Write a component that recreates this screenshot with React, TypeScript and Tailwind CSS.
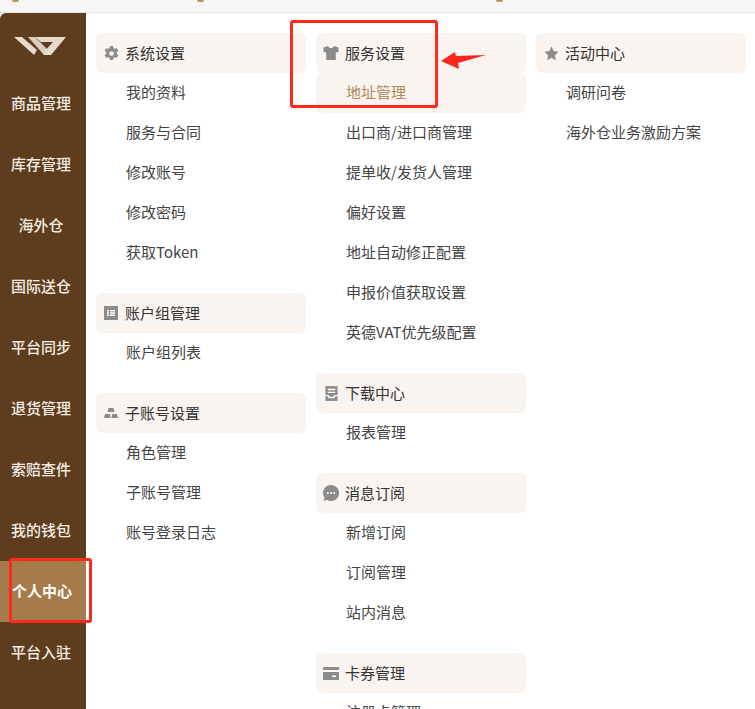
import { ReactNode } from "react";

const sideItems = [
  "商品管理",
  "库存管理",
  "海外仓",
  "国际送仓",
  "平台同步",
  "退货管理",
  "索赔查件",
  "我的钱包",
  "个人中心",
  "平台入驻",
];

function Gear() {
  return (
    <svg viewBox="1 1 14 14" className="w-[15px] h-[15px]" fill="#8c8c8c">
      <path d="M6.600 1h2.800l.5 2c.4.100.8.300 1.100.6l2-.6 1.400 2.400-1.500 1.400c.1.500.1.900 0 1.400l1.500 1.400-1.400 2.400-2-.6c-.3.300-.7.500-1.100.6l-.5 2H6.600l-.5-2a4 4 0 0 1-1.100-.6l-2 .6-1.400-2.400 1.500-1.400a4.500 4.500 0 0 1 0-1.400L1.600 5.400 3 3l2 .6c.3-.3.700-.5 1.100-.6l.5-2Z" />
      <circle cx="8" cy="8" r="2.200" fill="#f9f4f0" />
    </svg>
  );
}

function Shirt() {
  return (
    <svg viewBox="0 0 16 16" className="w-[16px] h-[16px]" fill="#8c8c8c">
      <path d="M5 1 0.500 2.500V7l2.700.4V15h9.600V7.400L15.500 7V2.500L11 1C10.500 2.500 9.300 3 8 3S5.500 2.500 5 1Z" />
    </svg>
  );
}

function Star() {
  return (
    <svg viewBox="0 0 16 16" className="w-[15px] h-[15px]" fill="#8c8c8c">
      <path d="m8 .5 2.300 4.900 5.200.7-3.800 3.700.9 5.300L8 12.500l-4.600 2.600.9-5.300L.5 6.100l5.200-.7L8 .5Z" />
    </svg>
  );
}

function TableBox() {
  return (
    <svg viewBox="0 0 14 14" className="w-[14px] h-[14px]">
      <rect width="14" height="14" fill="#8c8c8c" />
      <path d="M3 4h2v1.500H3zM6 4h5v1.500H6zM3 6.300h2v1.500H3zM6 6.300h5v1.500H6zM3 8.600h2v1.500H3zM6 8.600h5v1.500H6z" fill="#fff" />
    </svg>
  );
}

function Blocks() {
  return (
    <svg viewBox="0 0 14 14" className="w-[14px] h-[14px]" fill="#8c8c8c">
      <path d="M4.500 2h5l1 4h-7zM1 8h5l.500 4H0zM8 8h5l1 4H7.500z" />
    </svg>
  );
}

function Tray() {
  return (
    <svg viewBox="0 0 14 16" className="w-[13px] h-[15px]">
      <rect x="0.500" width="13" height="16" fill="#8c8c8c" />
      <path d="M3 3h8v1.500H3zM3 6h8v1.500H3z" fill="#fff" />
      <path d="M.5 9.500h3.500L5 11.500h4l1-2h3.500V11H11l-1 2H4l-1-2H.5z" fill="#fff" />
    </svg>
  );
}

function Bubble() {
  return (
    <svg viewBox="0 0 16 16" className="w-[16px] h-[16px]">
      <path d="M8 0a8 8 0 1 1-3.800 15L.5 15.800l1-3.200A8 8 0 0 1 8 0Z" fill="#8c8c8c" />
      <circle cx="4.800" cy="8" r="1" fill="#fff" />
      <circle cx="8" cy="8" r="1" fill="#fff" />
      <circle cx="11.200" cy="8" r="1" fill="#fff" />
    </svg>
  );
}

function Card() {
  return (
    <svg viewBox="0 0 16 13" className="w-[16px] h-[13px]">
      <rect width="16" height="13" rx="1" fill="#8c8c8c" />
      <rect y="3" width="16" height="2" fill="#fff" />
      <rect x="9" y="8.500" width="4" height="1.500" fill="#fff" />
    </svg>
  );
}

function Logo() {
  return (
    <svg viewBox="0 0 52 18" className="w-[52px] h-[18px]">
      <path d="M0 0h8l15 13-3 5z" fill="#e6dacb" />
      <path d="M14 0h7l13 13-4 5z" fill="#dccdbb" />
      <path d="M21 0h31L37 18h-7l-1-2 10-11H27z" fill="#e6dacb" />
    </svg>
  );
}

function Group({
  icon,
  title,
  items,
  active,
}: {
  icon: ReactNode;
  title: string;
  items: string[];
  active?: string;
}) {
  return (
    <div className="mb-5">
      <div className="flex items-center h-10 rounded-md bg-[#f9f4f0] text-[#333]">
        <span className="flex justify-center items-center w-[29px] pl-[1px]">{icon}</span>
        <span>{title}</span>
      </div>
      {items.map((item) => (
        <div
          key={item}
          className={
            item === active
              ? "flex items-center h-10 pl-[30px] rounded-md bg-[#f9f4f0] text-[#b08a5a]"
              : "flex items-center h-10 pl-[30px] text-[#444]"
          }
        >
          <span className="-translate-y-px">{item}</span>
        </div>
      ))}
    </div>
  );
}

export default function App() {
  return (
    <div
      className="relative w-[755px] h-[709px] overflow-hidden bg-white text-[15px]"
      style={{ fontFamily: '"Noto Sans CJK SC", "Liberation Sans", sans-serif' }}
    >
      <div className="relative h-[13px] bg-[#f6f6f6] border-b border-[#e6e6e6]">
        {/* bottoms of icons cut off by the crop */}
        <span className="absolute left-[12px] top-0 w-[7px] h-[2px] rounded-b-full bg-[#b8955f]" />
        <span className="absolute left-[197px] top-0 w-[7px] h-[2px] rounded-b-full bg-[#b8955f]" />
        <span className="absolute left-[496px] top-0 w-[7px] h-[2px] rounded-b-full bg-[#b8955f]" />
      </div>
      <div className="flex h-[696px]">
        <aside className="w-[86px] shrink-0 rounded-tl-md bg-[#5e3d1e] font-medium text-[#f3ebe2]">
          <div className="flex justify-center items-center h-[60px] pt-[6px] pr-[6px]">
            <Logo />
          </div>
          {sideItems.map((s) => (
            <div
              key={s}
              className={
                s === "个人中心"
                  ? "flex justify-center items-center h-[61px] pr-[2px] bg-[#a57b4b] text-white font-bold"
                  : "flex justify-center items-center h-[61px] pr-[4px]"
              }
            >
              {s}
            </div>
          ))}
        </aside>
        <main className="flex gap-[10px] pl-[10px] pt-[20px]">
          <div className="w-[210px]">
            <Group
              icon={<Gear />}
              title="系统设置"
              items={["我的资料", "服务与合同", "修改账号", "修改密码", "获取Token"]}
            />
            <Group icon={<TableBox />} title="账户组管理" items={["账户组列表"]} />
            <Group
              icon={<Blocks />}
              title="子账号设置"
              items={["角色管理", "子账号管理", "账号登录日志"]}
            />
          </div>
          <div className="w-[210px]">
            <Group
              icon={<Shirt />}
              title="服务设置"
              active="地址管理"
              items={[
                "地址管理",
                "出口商/进口商管理",
                "提单收/发货人管理",
                "偏好设置",
                "地址自动修正配置",
                "申报价值获取设置",
                "英德VAT优先级配置",
              ]}
            />
            <Group icon={<Tray />} title="下载中心" items={["报表管理"]} />
            <Group icon={<Bubble />} title="消息订阅" items={["新增订阅", "订阅管理", "站内消息"]} />
            <Group icon={<Card />} title="卡券管理" items={["注册卡管理"]} />
          </div>
          <div className="w-[210px]">
            <Group icon={<Star />} title="活动中心" items={["调研问卷", "海外仓业务激励方案"]} />
          </div>
        </main>
      </div>

      {/* annotations drawn over the screenshot */}
      <div className="absolute left-[290px] top-[20px] w-[148px] h-[88px] rounded-[3px] border-[3px] border-[#ff2a1c]" />
      <div className="absolute left-[9px] top-[558px] w-[83px] h-[65px] rounded-[3px] border-[3px] border-[#ff2a1c]" />
      <svg viewBox="0 0 46 18" className="absolute left-[441px] top-[52px] w-[46px] h-[18px]">
        <path d="M0 9 14 0l1 4 30-1-28 8 1 6z" fill="#f9281c" />
      </svg>
    </div>
  );
}
